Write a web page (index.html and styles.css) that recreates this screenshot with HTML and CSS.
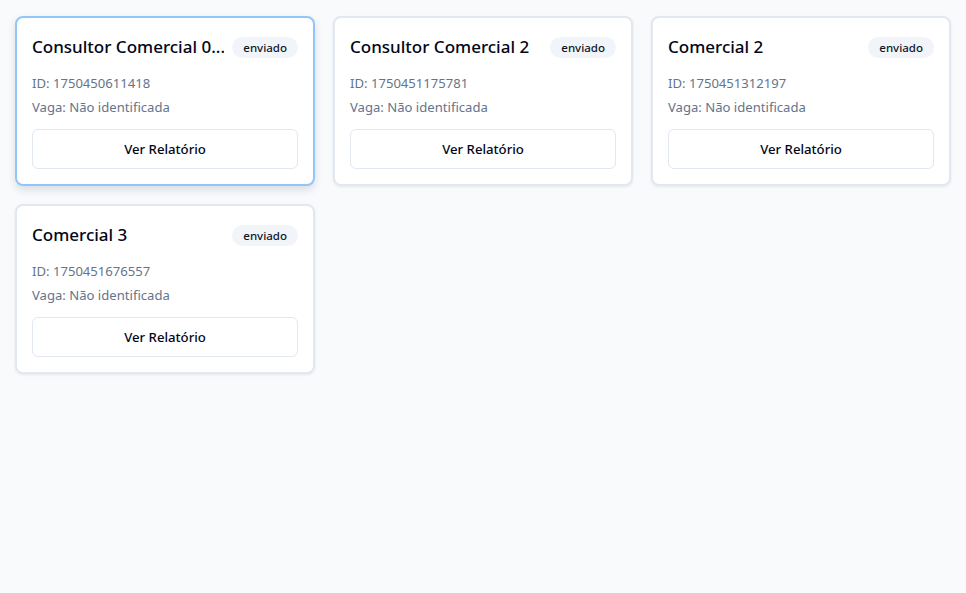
FILE: index.html
```html
<!DOCTYPE html>
<html lang="pt">
<head>
<meta charset="utf-8">
<link rel="stylesheet" href="styles.css">
</head>
<body>
<main class="grid">
  <div class="card card-active">
    <div class="card-head">
      <h3 class="card-title">Consultor Comercial 0...</h3>
      <span class="badge">enviado</span>
    </div>
    <div class="card-info">
      <p>ID: 1750450611418</p>
      <p>Vaga: Não identificada</p>
    </div>
    <button class="btn">Ver Relatório</button>
  </div>
  <div class="card">
    <div class="card-head">
      <h3 class="card-title">Consultor Comercial 2</h3>
      <span class="badge">enviado</span>
    </div>
    <div class="card-info">
      <p>ID: 1750451175781</p>
      <p>Vaga: Não identificada</p>
    </div>
    <button class="btn">Ver Relatório</button>
  </div>
  <div class="card">
    <div class="card-head">
      <h3 class="card-title">Comercial 2</h3>
      <span class="badge">enviado</span>
    </div>
    <div class="card-info">
      <p>ID: 1750451312197</p>
      <p>Vaga: Não identificada</p>
    </div>
    <button class="btn">Ver Relatório</button>
  </div>
  <div class="card">
    <div class="card-head">
      <h3 class="card-title">Comercial 3</h3>
      <span class="badge">enviado</span>
    </div>
    <div class="card-info">
      <p>ID: 1750451676557</p>
      <p>Vaga: Não identificada</p>
    </div>
    <button class="btn">Ver Relatório</button>
  </div>
</main>
</body>
</html>
```
FILE: styles.css
```css
* { box-sizing: border-box; }
html, body { margin: 0; padding: 0; }
body {
  background: #f8fafc;
  font-family: "Noto Sans", "Open Sans", sans-serif;
  color: #0f172a;
  width: 966px;
  height: 593px;
}
.grid {
  display: grid;
  grid-template-columns: repeat(3, 300px);
  gap: 18px;
  padding: 16px 15px;
}
.card {
  background: #fff;
  border: 2px solid #e2e8f0;
  border-radius: 8px;
  padding: 15px;
  box-shadow: 0 1px 3px rgba(15, 23, 42, 0.08);
}
.card-active {
  border-color: #93c5fd;
  box-shadow: 0 4px 8px rgba(15, 23, 42, 0.12);
}
.card-head {
  display: flex;
  align-items: center;
  justify-content: space-between;
  height: 28px;
  gap: 8px;
}
.card-title {
  margin: 0;
  font-size: 17px;
  font-weight: 500;
  line-height: 28px;
  white-space: nowrap;
  overflow: hidden;
  color: #020617;
}
.badge {
  flex: none;
  background: #f1f5f9;
  border-radius: 999px;
  font-size: 11.5px;
  font-weight: 500;
  line-height: 21px;
  height: 21px;
  padding: 0 11px;
  color: #0f172a;
}
.card-info {
  margin-top: 12px;
  display: flex;
  flex-direction: column;
  gap: 4px;
}
.card-info p {
  margin: 0;
  font-size: 13.1px;
  line-height: 20px;
  color: #64748b;
}
.btn {
  display: block;
  width: 100%;
  height: 40px;
  margin-top: 12px;
  background: #fff;
  border: 1px solid #e2e8f0;
  border-radius: 6px;
  font-family: inherit;
  font-size: 13.2px;
  font-weight: 500;
  color: #020617;
}
```
